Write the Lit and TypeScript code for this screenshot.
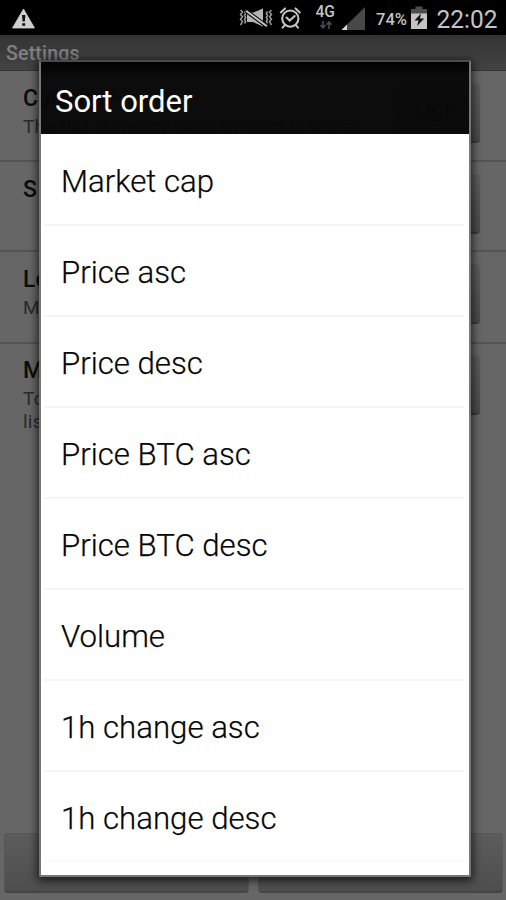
import { LitElement, html, svg, css } from "lit";
import { customElement, property } from "lit/decorators.js";

@customElement("status-bar")
class StatusBar extends LitElement {
  static styles = css`
    :host { display: flex; height: 35px; background: #000; color: #c4c4c4; position: relative; }
    svg { display: block; width: 506px; height: 35px; }
    text { font-family: Roboto, sans-serif; fill: #c4c4c4; }
    .net { font-size: 16px; font-weight: 500; }
    .pct { font-size: 17px; font-weight: 500; }
    .time { font-size: 26.5px; }
  `;
  render() {
    return html`<svg viewBox="0 0 506 35">${svg`
      <path d="M23.5 9 L34.5 28 H12.5 Z" fill="#d0d0d0" stroke="#d0d0d0" stroke-width=".8" stroke-linejoin="round"/>
      <path d="M22 15h3.4l-.6 6.6h-2.2zM22.2 23.2h3v2.6h-3z" fill="#111"/>
      <g fill="none" stroke="#999" stroke-width="1.5">
        <path d="M240.5 10l2 2-2 2.4 2 2.4-2 2.4 2 2.4-2 3.4M244.5 11.5l1.2 2-1.2 2 1.2 2-1.2 2 1.2 2-1.2 2"/>
        <path d="M271.5 10l-2 2 2 2.4-2 2.4 2 2.4-2 2.4 2 3.4M267.5 11.5l-1.2 2 1.2 2-1.2 2 1.2 2-1.2 2 1.2 2"/>
      </g>
      <path d="M247 12.5h6.5l9.5-4V26.5l-10-4.5H247z" fill="#b4b4b4"/>
      <path d="M246 10.8L267 26.3" stroke="#000" stroke-width="4"/>
      <path d="M246 10.8L267 26.3" stroke="#c4c4c4" stroke-width="2"/>
      <g fill="none" stroke="#c4c4c4" stroke-width="2.1" stroke-linecap="round">
        <circle cx="290.3" cy="18.6" r="8.1"/>
        <path d="M286.5 17.5l3.2 3.1 5-4.6M280.8 12.4l4.2-4M299.8 12.4l-4.2-4M284.6 25.4l-2 2.2M296 25.4l2 2.2"/>
      </g>
      <text class="net" x="315.5" y="17.3" textLength="19.5" lengthAdjust="spacingAndGlyphs">4G</text>
      <g fill="none" stroke="#4c4c4c" stroke-width="1.6">
        <path d="M323 21v6.5M320.5 25l2.5 2.8 2.5-2.8M329 29v-6.5M326.5 24.8l2.5-2.8 2.5 2.8"/>
      </g>
      <path d="M365 7V30H341.5Z" fill="#484848"/>
      <path d="M347 24.6V30H341.5Z" fill="#d8d8d8"/>
      <text class="pct" x="376" y="25" textLength="31" lengthAdjust="spacingAndGlyphs">74%</text>
      <path d="M415.5 6.5h7V9h4.5v5H411V9h4.5z" fill="#4c4c4c"/>
      <path d="M411 13.5h16V29h-16z" fill="#c4c4c4"/>
      <path d="M421 13.5l-6.5 7h4l-1.3 5.5 7-7.4h-4.2z" fill="#111"/>
      <text class="time" x="436.5" y="28" textLength="61" lengthAdjust="spacingAndGlyphs">22:02</text>
    `}</svg>`;
  }
}

@customElement("setting-row")
class SettingRow extends LitElement {
  @property() heading = "";
  @property() note = "";
  @property() value = "";
  static styles = css`
    :host { display: flex; box-sizing: border-box; justify-content: space-between; padding: 12px 26px 0 23px; border-bottom: 2px solid #545454; }
    .heading { font: 500 23px/32px Roboto, sans-serif; color: #0c0c0c; white-space: nowrap; }
    .note { font: 400 19px/23px Roboto, sans-serif; color: #2a2a2a; white-space: pre; letter-spacing: .25px; }
    .button { box-sizing: border-box; width: 86px; height: 60px; border-radius: 4px; border-bottom: 2px solid #3c3c3c; background: linear-gradient(#5d5d5d, #4a4a4a);
      font: 24px/60px Roboto, sans-serif; color: #111; text-align: center; flex: none; }
  `;
  render() {
    return html`<div><div class="heading">${this.heading}</div><div class="note">${this.note}</div></div>
      <div class="button">${this.value}</div>`;
  }
}

@customElement("sort-dialog")
class SortDialog extends LitElement {
  static options = ["Market cap", "Price asc", "Price desc", "Price BTC asc", "Price BTC desc", "Volume", "1h change asc", "1h change desc"];
  static styles = css`
    :host { display: flex; flex-direction: column; box-sizing: border-box; border: 2px solid #777; border-top-color: #4a4a4a; border-radius: 2px;
      box-shadow: 0 2px 9px 2px rgba(0,0,0,.65); overflow: hidden; font-family: Roboto, sans-serif; }
    .title { box-sizing: border-box; height: 72px; padding: 5px 0 0 14px; background: linear-gradient(rgba(0,0,0,.97), rgba(8,8,8,.96) 16px);
      color: #fff; font-size: 31px; line-height: 70px; flex: none; }
    .title span, .option span { display: inline-block; white-space: nowrap; }
    .list { flex: 1; background: #fff; padding: 0 5px 0 3px; }
    .option { box-sizing: border-box; height: 91px; padding: 3px 0 0 17px; border-bottom: 2px solid #f5f5f5; font-size: 31.2px; font-weight: 300; line-height: 88px; color: #000; -webkit-text-stroke: .25px #222; }
    .option:first-child { height: 92px; padding-top: 4px; }
    .option:last-child { height: 90px; border-color: #fbfbfb; }
  `;
  render() {
    return html`<div class="title"><span>Sort order</span></div>
      <div class="list">${SortDialog.options.map((o) => html`<div class="option"><span>${o}</span></div>`)}</div>`;
  }
}

@customElement("app-root")
class AppRoot extends LitElement {
  static styles = css`
    :host { display: flex; flex-direction: column; position: relative; width: 506px; height: 900px; overflow: hidden; background: #666; }
    .bar { box-sizing: border-box; height: 36px; padding: 1px 0 0 6px; background: linear-gradient(#343434, #434343); border-bottom: 1px solid #333;
      color: #808080; font: 500 19.5px/35px Roboto, sans-serif; letter-spacing: .2px; flex: none; }
    .first { height: 91px; }
    .second { height: 90px; }
    .third { height: 92px; }
    .fourth { border: 0; padding-top: 11px; }
    .actions { display: flex; gap: 9px; margin-top: auto; padding: 0 3px 7px 4px; }
    .action { flex: 1; box-sizing: border-box; height: 60px; border-radius: 4px; background: linear-gradient(#5c5c5c, #4e4e4e); border: 1px solid #565656; border-bottom: 2px solid #454545; }
    sort-dialog { position: absolute; left: 39px; top: 60px; width: 432px; height: 817px; }
  `;
  render() {
    return html`<status-bar></status-bar>
      <div class="bar">Settings</div>
      <setting-row class="first" heading="Currency" note="The fiat currency used to display prices" value="USD"></setting-row>
      <setting-row class="second" heading="S"></setting-row>
      <setting-row class="third" heading="Lo" note="M"></setting-row>
      <setting-row class="fourth" heading="M" .note=${"To\nlis"}></setting-row>
      <div class="actions"><div class="action"></div><div class="action"></div></div>
      <sort-dialog></sort-dialog>`;
  }
}
